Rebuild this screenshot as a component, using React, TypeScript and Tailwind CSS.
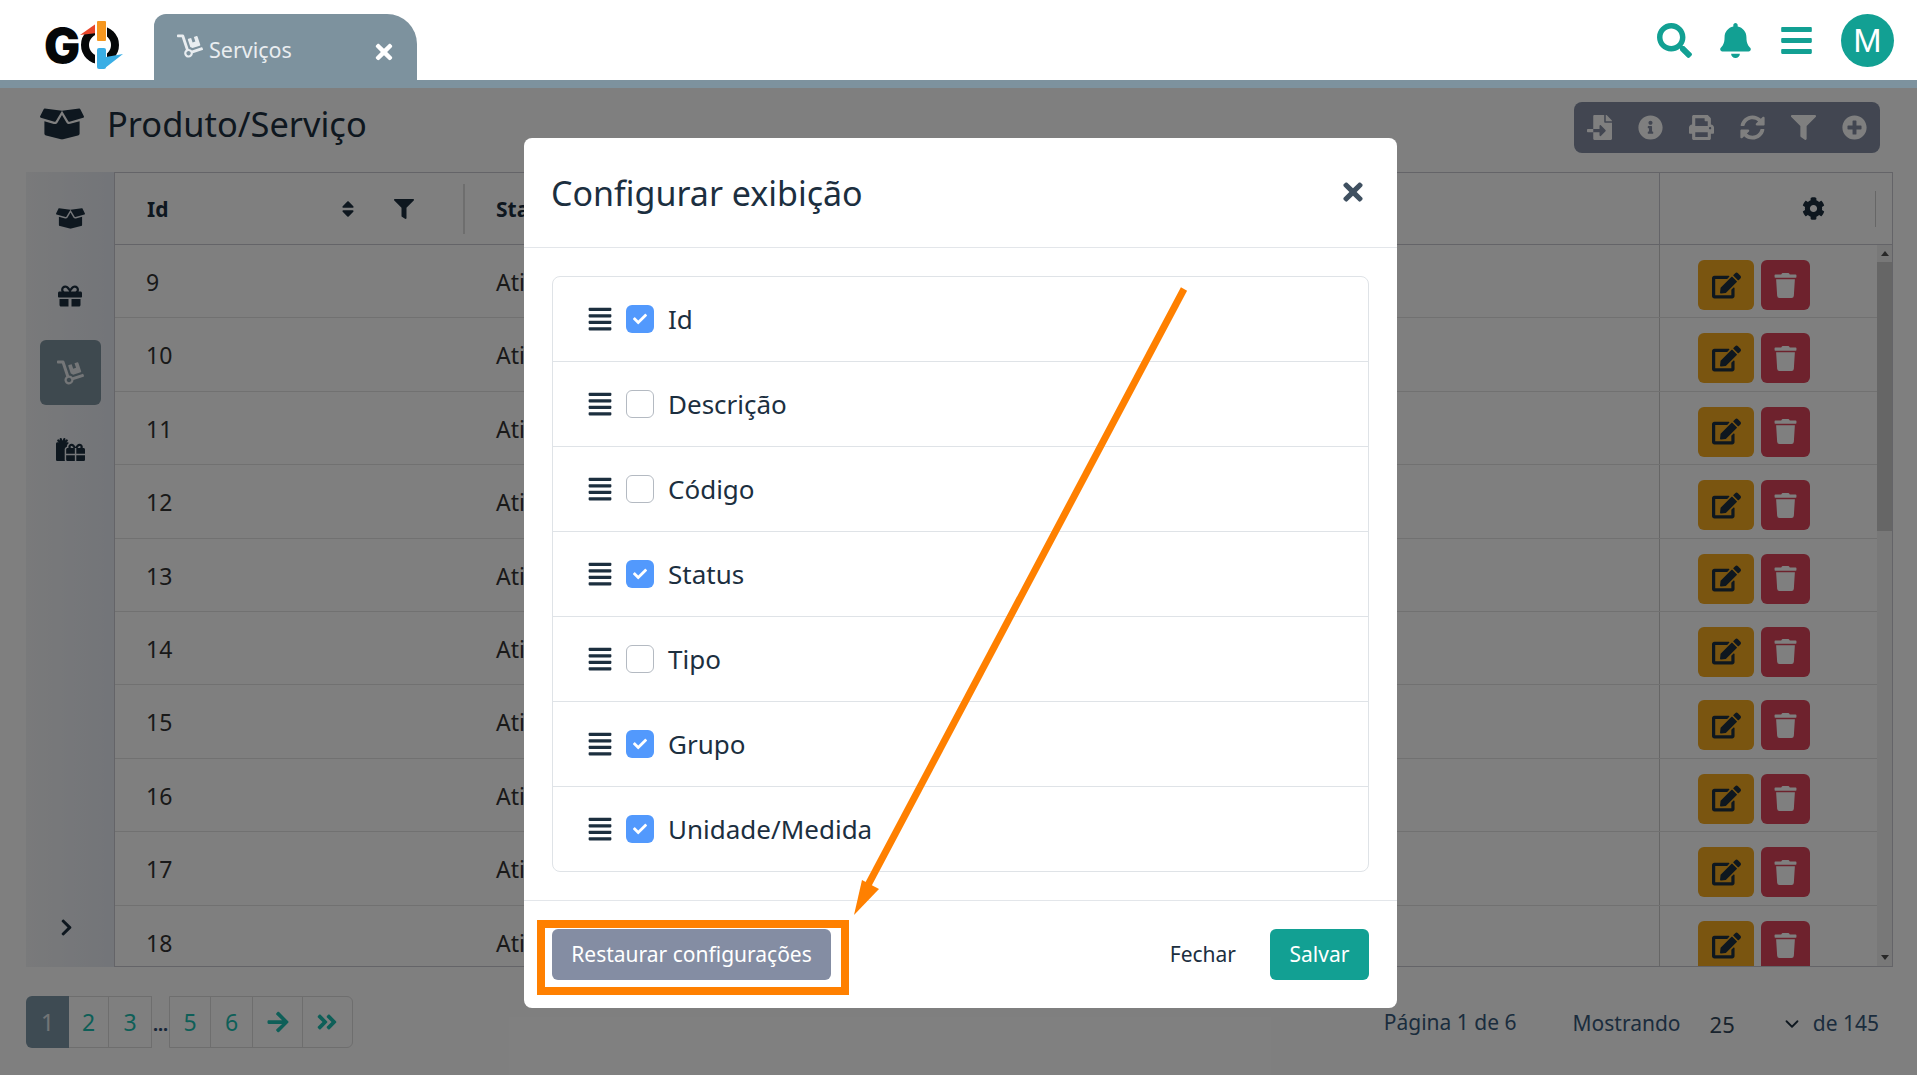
import React from "react";
import {
  FaAlignJustify, FaAngleDoubleRight, FaArrowRight, FaBars, FaBell, FaBoxOpen, FaCheck, FaChevronRight, FaCog, FaDolly,
  FaEdit, FaFileImport, FaFilter, FaGift, FaGifts, FaInfoCircle, FaPlusCircle, FaPrint, FaSearch, FaSort, FaSyncAlt, FaTimes, FaTrash,
} from "react-icons/fa";
import { LuChevronDown } from "react-icons/lu";

const ids = [9, 10, 11, 12, 13, 14, 15, 16, 17, 18];
const columns: [string, boolean][] = [
  ["Id", true], ["Descrição", false], ["Código", false], ["Status", true], ["Tipo", false], ["Grupo", true], ["Unidade/Medida", true],
];

function Logo() {
  return (
    <svg width="90" height="54" viewBox="-7 0 90 54" className="shrink-0">
      <text x="-1" y="45" fontFamily="Inter" fontWeight="900" fontSize="48" fill="#050708">G</text>
      <circle cx="55" cy="27" r="15" fill="none" stroke="#050708" strokeWidth="8" />
      <polygon points="35,17 52,5 52,15" fill="#e8452a" />
      <rect x="50" y="2" width="12" height="24" fill="#fff" />
      <rect x="52" y="3" width="9" height="20" rx="1" fill="#f6971f" />
      <rect x="50" y="29" width="12" height="22" fill="#fff" />
      <polygon points="60,50 78,36 61,39" fill="#3aaee5" />
      <rect x="52" y="30" width="9" height="21" rx="2" fill="#3aaee5" />
    </svg>
  );
}

function Header() {
  return (
    <header className="relative z-20 h-[88px] shrink-0 bg-white border-b-8 border-[#7d929e] flex items-start">
      <div className="w-[154px] h-[80px] pl-[38px] pt-[18px] shrink-0"><Logo /></div>
      <div className="w-[263px] h-[66px] mt-[14px] bg-[#7d929e] rounded-tl-[12px] rounded-tr-[30px] flex items-center pl-[23px] pr-[21px] text-[#e9edf0]">
        <FaDolly className="text-[26px] -mt-[2px]" />
        <span className="ml-[6px] text-[21.5px] mt-[6px]">Serviços</span>
        <FaTimes className="ml-auto mt-[9px] text-[24px] text-white" />
      </div>
      <div className="ml-auto flex items-center h-[80px] text-[#12a093] pr-[23px]">
        <FaSearch className="text-[35px]" />
        <FaBell className="text-[35px] ml-[26px]" />
        <FaBars className="text-[35px] ml-[26px]" />
        <div className="w-[53px] h-[53px] ml-[27px] rounded-full bg-[#12a093] text-white flex items-center justify-center text-[34px] font-['Liberation_Sans',sans-serif]">M</div>
      </div>
    </header>
  );
}

function Row({ id }: { id: number }) {
  return (
    <div className="h-[73.4px] shrink-0 flex border-b border-[#e2e2e2] text-[#333] text-[23px]">
      <div className="w-[350px] pl-[31px] pt-[20px]">{id}</div>
      <div className="pl-[31px] pt-[20px] flex-1">Ativo</div>
      <div className="w-[218px] border-l border-[#cccccc] flex gap-[7px] pl-[38px] pt-[15px]">
        <div className="w-[56px] h-[50px] rounded-[6px] bg-[#f5aa20] flex items-center justify-center text-[#1c2f3f] text-[29px]"><FaEdit /></div>
        <div className="w-[49px] h-[50px] rounded-[6px] bg-[#dc445a] flex items-center justify-center text-white text-[25px]"><FaTrash /></div>
      </div>
    </div>
  );
}

function Table() {
  return (
    <div className="flex-1 min-w-0 border border-[#c8c8d0] bg-white flex flex-col overflow-hidden">
      <div className="h-[72px] shrink-0 flex items-center border-b border-[#c8c8d0] text-[#1c2f3f] font-bold text-[21px]">
        <div className="w-[350px] flex items-center pl-[32px] h-[50px] border-r-2 border-[#dddddd]">
          <span className="mt-[2px]">Id</span>
          <FaSort className="ml-[170px] text-[20px]" />
          <FaFilter className="ml-[36px] text-[20px]" />
        </div>
        <div className="pl-[31px] flex-1 mt-[2px]">Status</div>
        <div className="w-[233px] h-full border-l border-[#c8c8d0] flex items-center justify-end pr-[16px]">
          <FaCog className="text-[23px] mr-[50px]" />
          <div className="h-[36px] border-l border-[#cccccc]" />
        </div>
      </div>
      <div className="flex-1 min-h-0 flex">
        <div className="flex-1 min-w-0 flex flex-col overflow-hidden">
          {ids.map((id) => <Row key={id} id={id} />)}
        </div>
        <div className="w-[15px] bg-[#f1f1f1] flex flex-col items-center pt-[6px] pb-[6px]">
          <div className="w-0 h-0 border-x-[4px] border-x-transparent border-b-[5px] border-b-[#505050]" />
          <div className="w-full h-[269px] mt-[6px] bg-[#cdcdcd]" />
          <div className="mt-auto w-0 h-0 border-x-[4px] border-x-transparent border-t-[5px] border-t-[#505050]" />
        </div>
      </div>
    </div>
  );
}

function Sidebar() {
  const cls = "h-[65px] w-[61px] rounded-[6px] flex items-center justify-center text-[#1c2f3f]";
  return (
    <aside className="w-[88px] shrink-0 bg-gradient-to-r from-[#f3f4f6] to-[#e6eaf2] flex flex-col items-center relative">
      <div className="flex flex-col gap-[12px] pt-[14px]">
        <div className={cls}><FaBoxOpen className="text-[29px]" /></div>
        <div className={cls}><FaGift className="text-[24px]" /></div>
        <div className={`${cls} bg-[#7d929e]`}><FaDolly className="text-[27px] text-[#e9edf0]" /></div>
        <div className={cls}><FaGifts className="text-[29px]" /></div>
      </div>
      <FaChevronRight className="mt-auto mb-[30px] mr-[7px] text-[#1c2f3f] text-[19px]" />
    </aside>
  );
}

function Pagination() {
  const cell = "h-full flex items-center justify-center border-r border-[#dcdcdc] text-[#1cbfb0] text-[23px]";
  return (
    <div className="flex h-[52px] items-stretch">
      <div className="w-[43px] rounded-l-[6px] bg-[#7c96a6] text-white/80 flex items-center justify-center text-[23px]">1</div>
      <div className="flex border-y border-r border-[#dcdcdc]">
        <div className={`${cell} w-[40px]`}>2</div>
        <div className={`${cell} w-[42px] border-r-0`}>3</div>
      </div>
      <div className="w-[17px] text-[#2c4a70] text-[18px] font-bold flex items-center justify-center leading-none pt-[4px]">...</div>
      <div className="flex border border-[#dcdcdc] rounded-r-[6px]">
        <div className={`${cell} w-[41px]`}>5</div>
        <div className={`${cell} w-[42px]`}>6</div>
        <div className={`${cell} w-[50px]`}><FaArrowRight className="text-[24px]" /></div>
        <div className={`${cell} w-[49px] border-r-0 pr-[2px]`}><FaAngleDoubleRight className="text-[24px]" /></div>
      </div>
    </div>
  );
}

function Page() {
  return (
    <main className="flex-1 min-h-0 bg-white pl-[26px] pr-[24px] flex flex-col">
      <div className="h-[84px] shrink-0 flex items-start">
        <FaBoxOpen className="mt-[14px] ml-[14px] text-[#1c2f3f] text-[44px] w-[44px]" />
        <h1 className="ml-[23px] mt-[14px] text-[34.4px] leading-[44px] text-[#1c2f3f]">Produto/Serviço</h1>
        <div className="ml-auto mt-[14px] mr-[13px] w-[306px] h-[51px] rounded-[8px] bg-[#848da3] flex items-center justify-between px-[13px] text-white text-[25px]">
          <FaFileImport /><FaInfoCircle /><FaPrint /><FaSyncAlt /><FaFilter /><FaPlusCircle />
        </div>
      </div>
      <div className="h-[795px] shrink-0 flex">
        <Sidebar />
        <Table />
      </div>
      <div className="flex items-start pt-[29px]">
        <Pagination />
        <div className="ml-auto flex items-center h-[52px] text-[21px] text-[#37597a] pt-[4px]">
          <span className="mr-[56px] -mt-[3px]">Página 1 de 6</span>
          <span>Mostrando</span>
          <span className="ml-[29px] text-[22px] text-[#33475a]">25</span>
          <LuChevronDown className="ml-[46px] text-[22px] text-[#1c2f3f]" />
          <span className="ml-[10px] mr-[14px]">de 145</span>
        </div>
      </div>
    </main>
  );
}

function Modal() {
  return (
    <div className="absolute left-[524px] top-[138px] w-[873px] h-[870px] z-30 bg-white rounded-[8px] flex flex-col text-[#1c2f3f]">
      <div className="h-[110px] shrink-0 border-b border-[#e3e6ea] flex items-center pl-[27px] pr-[28px]">
        <h2 className="text-[34px] font-normal mt-[2px]">Configurar exibição</h2>
        <FaTimes className="ml-auto text-[#3f5060] text-[28px] mr-[2px] -mt-[1px]" />
      </div>
      <div className="flex-1 min-h-0 px-[28px] pt-[28px]">
        <div className="border border-[#dfe3e7] rounded-[8px] h-[596px]">
          {columns.map(([name, checked], i) => (
            <div key={name} className={`flex items-center pl-[34px] ${i > 0 ? "h-[85px] border-t border-[#dfe3e7]" : "h-[84px]"}`}>
              <FaAlignJustify className="text-[26px]" />
              <span className={`ml-[13px] w-[28px] h-[28px] rounded-[6px] flex items-center justify-center ${checked ? "bg-[#5299fd]" : "border border-[#b4bac2]"}`}>
                {checked && <FaCheck className="text-white text-[14px]" />}
              </span>
              <span className="ml-[14px] text-[26px] mt-[1px]">{name}</span>
            </div>
          ))}
        </div>
      </div>
      <div className="h-[108px] shrink-0 border-t border-[#e3e6ea] flex items-start pt-[28px] px-[28px]">
        <button className="w-[279px] h-[51px] pt-[1px] rounded-[6px] bg-[#848da3] text-white text-[21px]">Restaurar configurações</button>
        <span className="ml-auto h-[51px] pt-[1px] flex items-center text-[21px]">Fechar</span>
        <button className="ml-[34px] w-[99px] h-[51px] pt-[1px] rounded-[6px] bg-[#12a093] text-white text-[21px]">Salvar</button>
      </div>
    </div>
  );
}

export default function App() {
  return (
    <div className="relative w-[1917px] h-[1075px] overflow-hidden flex flex-col bg-white font-['Noto_Sans',sans-serif]">
      <Header />
      <Page />
      <div className="absolute left-0 right-0 top-[88px] bottom-0 z-10 bg-black/50" />
      <Modal />
      <div className="absolute z-40 left-[537px] top-[920px] w-[312px] h-[75px] border-[8px] border-[#ff8000]" />
      <svg className="absolute z-40 left-0 top-0 pointer-events-none" width="1917" height="1075" viewBox="0 0 1917 1075">
        <line x1="1184" y1="289" x2="868" y2="885" stroke="#ff8000" strokeWidth="7" />
        <polygon points="854,915 862,880 879,889" fill="#ff8000" />
      </svg>
    </div>
  );
}
